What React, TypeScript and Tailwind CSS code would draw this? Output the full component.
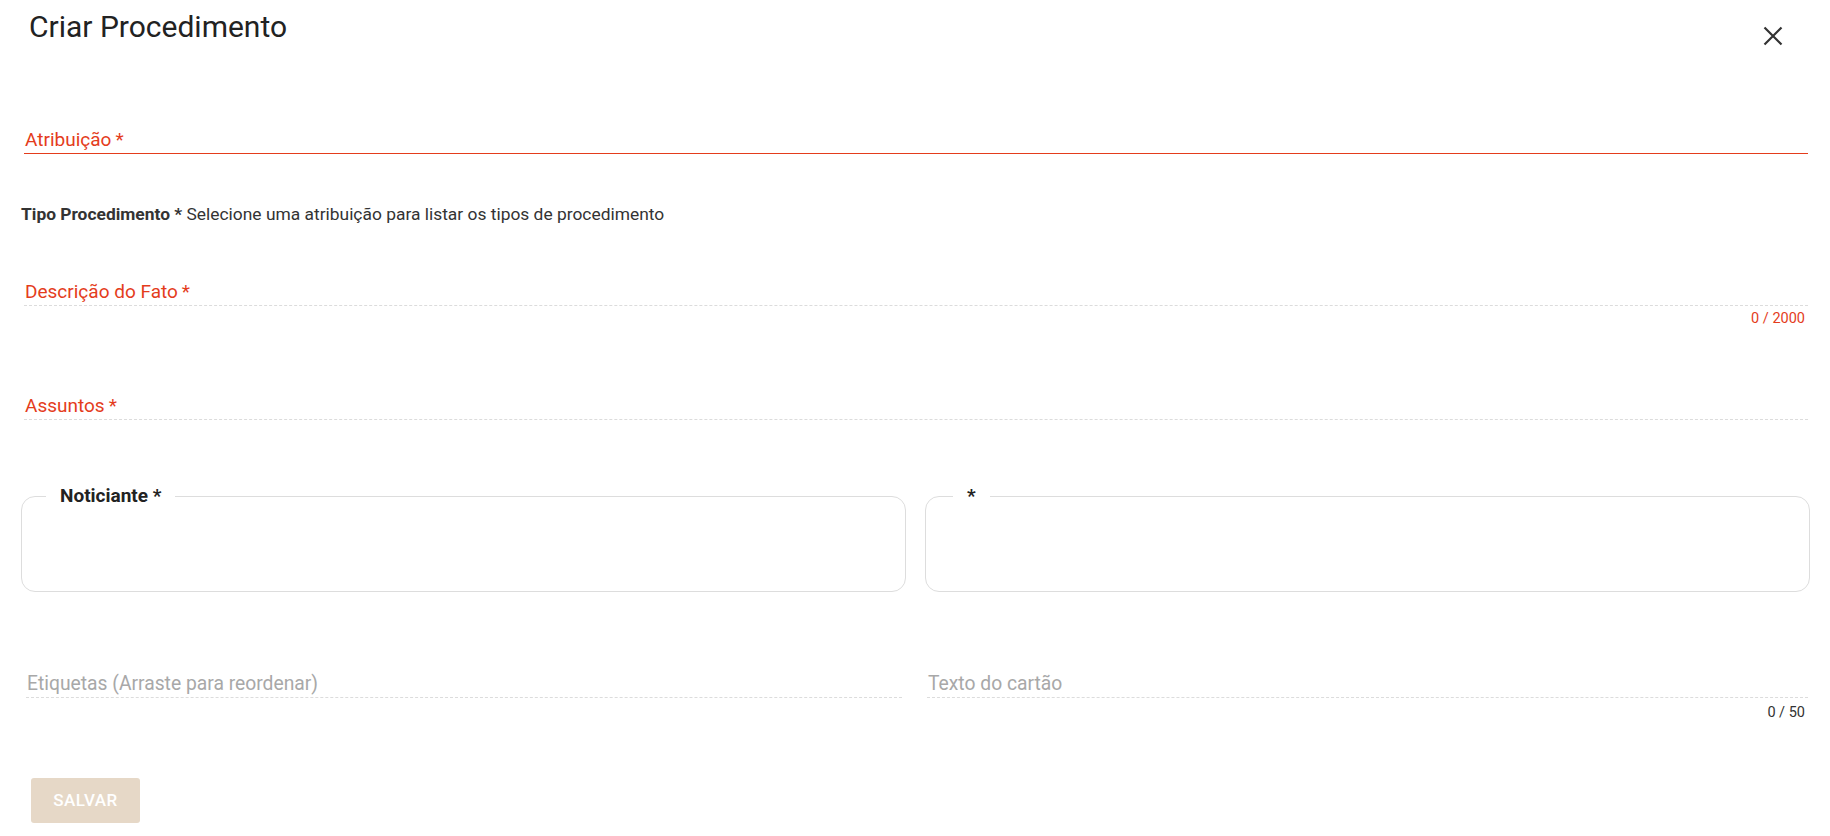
import { useState } from "react";

const RED = "text-[#e43c1c]";

const Field = ({ label, required, tone, line, counter, counterTone }: {
  label: string;
  required?: boolean;
  tone: "error" | "muted";
  line: "solid" | "dashed";
  counter?: string;
  counterTone?: "error" | "dark";
}) => (
  <div>
    <div
      className={`h-[26px] pl-[1px] leading-[24px] ${
        tone === "error" ? `text-[19px] ${RED}` : "text-[19.3px] text-[#a8a8a8]"
      } ${line === "solid" ? "border-b border-[#e43c1c]" : "border-b border-dashed border-[#dcdcdc]"}`}
    >
      {label}
      {required && <span className="ml-[4px]">*</span>}
    </div>
    {counter && (
      <div
        className={`pr-[3px] text-right text-[14.5px] leading-[16px] ${
          counterTone === "error" ? `mt-[5px] ${RED}` : "mt-[7px] text-[#333333]"
        }`}
      >
        {counter}
      </div>
    )}
  </div>
);

export default function App() {
  const [open, setOpen] = useState(true);

  if (!open) return null;

  return (
    <div className="min-h-screen w-full bg-white font-['Roboto',sans-serif] text-[#333333]">
      {/* Header */}
      <div className="flex h-[128px] items-start justify-between">
        <h1 className="ml-[29px] mt-[9px] text-[30px] font-normal leading-[36px] text-[#222222]">
          Criar Procedimento
        </h1>
        <button
          className="mr-[47px] mt-[26px] h-[20px] w-[20px]"
          aria-label="Fechar"
          onClick={() => setOpen(false)}
        >
          <svg viewBox="0 0 20 20" className="h-[20px] w-[20px]" fill="none" stroke="#333333" strokeWidth={2.2}>
            <path d="M1.5 1.5L18.5 18.5M18.5 1.5L1.5 18.5" />
          </svg>
        </button>
      </div>

      {/* Atribuição */}
      <div className="ml-[24px] mr-[22px]">
        <Field label="Atribuição" required tone="error" line="solid" />
      </div>

      {/* Tipo procedimento */}
      <div className="ml-[21px] mt-[50px] text-[17.4px] leading-[20px] text-[#333333]">
        <span className="font-bold">Tipo Procedimento *</span>{" "}
        Selecione uma atribuição para listar os tipos de procedimento
      </div>

      {/* Descrição do fato */}
      <div className="ml-[24px] mr-[22px] mt-[56px]">
        <Field label="Descrição do Fato" required tone="error" line="dashed" counter="0 / 2000" counterTone="error" />
      </div>

      {/* Assuntos */}
      <div className="ml-[24px] mr-[22px] mt-[67px]">
        <Field label="Assuntos" required tone="error" line="dashed" />
      </div>

      {/* Noticiante / Noticiado */}
      <div className="ml-[21px] mr-[20px] mt-[64px] grid grid-cols-2 gap-[19px]">
        <fieldset className="h-[108px] rounded-[14px] border border-[#dddddd] pl-[24px]">
          <legend className="px-[14px] text-[19px] font-bold leading-[24px] text-[#222222]">
            Noticiante *
          </legend>
        </fieldset>
        <fieldset className="h-[108px] rounded-[14px] border border-[#dddddd] pl-[27px]">
          <legend className="px-[14px] text-[19px] font-bold leading-[24px] text-[#222222]">
            *
          </legend>
        </fieldset>
      </div>

      {/* Etiquetas / Texto do cartão */}
      <div className="ml-[21px] mr-[20px] mt-[80px] grid grid-cols-2 gap-[19px]">
        <div className="pl-[5px] pr-[4px]">
          <Field label="Etiquetas (Arraste para reordenar)" tone="muted" line="dashed" />
        </div>
        <div className="pl-[2px] pr-[2px]">
          <Field label="Texto do cartão" tone="muted" line="dashed" counter="0 / 50" counterTone="dark" />
        </div>
      </div>

      {/* Salvar */}
      <div className="ml-[31px] mt-[57px]">
        <button
          disabled
          className="h-[45px] w-[109px] rounded-[3px] bg-[#e6d8c7] text-[17px] font-medium uppercase tracking-[0.5px] text-white"
        >
          Salvar
        </button>
      </div>
    </div>
  );
}
